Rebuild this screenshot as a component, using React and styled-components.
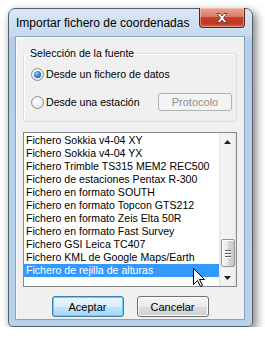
// Diálogo "Importar fichero de coordenadas" al estilo Windows 7

import React, { useState } from 'react';
import styled, { createGlobalStyle } from 'styled-components';

const GlobalStyle = createGlobalStyle`
  html, body {
    margin: 0;
    padding: 0;
    background: #ffffff;
  }
  *, *::before, *::after {
    box-sizing: border-box;
  }
`;

const ui = '"Liberation Sans", Arial, sans-serif';

const formatos = [
  'Fichero Sokkia v4-04 XY',
  'Fichero Sokkia v4-04 YX',
  'Fichero Trimble TS315 MEM2 REC500',
  'Fichero de estaciones Pentax R-300',
  'Fichero en formato SOUTH',
  'Fichero en formato Topcon GTS212',
  'Fichero en formato Zeis Elta 50R',
  'Fichero en formato Fast Survey',
  'Fichero GSI Leica TC407',
  'Fichero KML de Google Maps/Earth',
  'Fichero de rejilla de alturas',
];

// Ventana con marco Aero básico
const Window = styled.div`
  position: relative;
  margin: 8px 0 0 8px;
  width: 245px;
  height: 319px;
  display: flex;
  flex-direction: column;
  padding: 0 7px 6px 6px;
  border: 1px solid #56606c;
  border-radius: 7px 7px 5px 5px;
  background: linear-gradient(180deg, #dae6f3 0px, #c6d9ee 28px, #b3cfed 28px, #b8d2ee 100%);
  box-shadow: 3px 4px 9px 1px rgba(0, 0, 0, 0.45);
  font-family: ${ui};
  font-size: 10.6px;
  color: #000;
`;

const TitleBar = styled.div`
  height: 27px;
  flex: none;
  display: flex;
  align-items: flex-start;
  justify-content: space-between;
`;

const Title = styled.span`
  align-self: center;
  padding-left: 1px;
  font-size: 12px;
  color: #000;
  white-space: nowrap;
`;

const CloseButton = styled.div`
  margin-top: -1px;
  width: 46px;
  height: 20px;
  display: flex;
  align-items: center;
  justify-content: center;
  border: 1px solid #5e2219;
  border-top: none;
  border-radius: 0 0 4px 4px;
  background: linear-gradient(180deg, #e7a594 0%, #d97b66 45%, #c6412b 50%, #bd3620 80%, #d6664a 100%);
  box-shadow: inset 0 0 0 1px rgba(255, 220, 210, 0.45);
`;

const Client = styled.div`
  flex: 1;
  display: flex;
  flex-direction: column;
  padding: 0 7px;
  background: #f0f0f0;
  border: 1px solid #8ba3bf;
  box-shadow: inset 1px 1px 0 #fbfbfb;
`;

const Group = styled.fieldset`
  margin: 10px 0 0;
  padding: 5px 4px 10px 7px;
  border: 1px solid #d5dfe5;
  border-radius: 3px;
  box-shadow: inset 1px 1px 0 #ffffff;
  display: flex;
  flex-direction: column;
  gap: 10px;
`;

const Legend = styled.legend`
  margin-left: -3px;
  padding: 0 2px;
  line-height: 13px;
`;

const OptionRow = styled.div`
  height: 18px;
  display: flex;
  align-items: center;
`;

const Radio = styled.span`
  width: 13px;
  height: 13px;
  flex: none;
  border-radius: 50%;
  border: 1px solid #8f8f8f;
  background: radial-gradient(circle at 40% 35%, #ffffff 0%, #f1f1f1 45%, #d7d7d7 100%);
  display: flex;
  align-items: center;
  justify-content: center;

  &::after {
    content: '';
    display: ${props => (props.$checked ? 'block' : 'none')};
    width: 7px;
    height: 7px;
    border-radius: 50%;
    background: radial-gradient(circle at 40% 35%, #8fd2ff 0%, #2d87d8 45%, #0b3f86 100%);
  }
`;

const OptionText = styled.span`
  margin-left: 2px;
  white-space: nowrap;
`;

const SmallButton = styled.div`
  margin-left: auto;
  width: 74px;
  height: 18px;
  display: flex;
  align-items: center;
  justify-content: center;
  border: 1px solid #adb2b5;
  border-radius: 3px;
  background: #f4f4f4;
  color: #8f8f8f;
  font-size: 11px;
`;

const ListBox = styled.div`
  margin-top: 10px;
  height: 155px;
  display: flex;
  border: 1px solid #828790;
  background: #ffffff;
`;

const Items = styled.div`
  flex: 1;
  padding-top: 1px;
  display: flex;
  flex-direction: column;
`;

const Item = styled.div`
  height: 13px;
  line-height: 13px;
  padding-left: 2px;
  white-space: nowrap;
  background: ${props => (props.$selected ? '#3399ff' : 'transparent')};
  color: ${props => (props.$selected ? '#ffffff' : '#000000')};
`;

const ScrollBar = styled.div`
  width: 17px;
  flex: none;
  display: flex;
  flex-direction: column;
  background: linear-gradient(90deg, #e3e3e3 0%, #f4f4f4 15%, #f0f0f0 85%, #e3e3e3 100%);
`;

const Arrow = styled.div`
  height: 17px;
  flex: none;
  display: flex;
  align-items: center;
  justify-content: center;
`;

const Track = styled.div`
  flex: 1;
  display: flex;
  flex-direction: column;
  justify-content: flex-end;
  padding-bottom: 2px;
`;

const Thumb = styled.div`
  margin: 0 1px 0 2px;
  height: 28px;
  display: flex;
  flex-direction: column;
  align-items: center;
  justify-content: center;
  gap: 2px;
  border: 1px solid #959595;
  border-radius: 2px;
  background: linear-gradient(90deg, #f2f2f2 0%, #ebebeb 50%, #d6d6d6 50%, #c6c6c6 100%);
  box-shadow: inset 1px 1px 0 #ffffff;
`;

const Grip = styled.span`
  width: 6px;
  height: 1px;
  background: #5f5f5f;
  box-shadow: 0 1px 0 #ffffff;
`;

const ButtonRow = styled.div`
  margin-top: 9px;
  display: flex;
  justify-content: center;
  gap: 13px;
`;

const Button = styled.div`
  width: 72px;
  height: 21px;
  display: flex;
  align-items: center;
  justify-content: center;
  font-size: 11px;
  border: 1px solid ${props => (props.$default ? '#3c7fb1' : '#707070')};
  border-radius: 3px;
  background: ${props =>
    props.$default
      ? 'linear-gradient(180deg, #eaf6fd 0%, #d9f0fc 50%, #bee6fd 50%, #a7d9f5 100%)'
      : 'linear-gradient(180deg, #f2f2f2 0%, #ebebeb 50%, #dddddd 50%, #cfcfcf 100%)'};
  box-shadow: inset 0 0 0 1px ${props => (props.$default ? '#5fd0fb' : '#fcfcfc')};
`;

const Cursor = styled.svg`
  position: absolute;
  left: 184px;
  top: 259px;
  pointer-events: none;
`;

function ArrowIcon({ up }) {
  return (
    <svg width="7" height="4" viewBox="0 0 7 4">
      <path d={up ? 'M0 4 L3.5 0 L7 4 Z' : 'M0 0 L7 0 L3.5 4 Z'} fill="#222" />
    </svg>
  );
}

function App() {
  const [origen, setOrigen] = useState('fichero');
  const seleccionado = formatos.length - 1;

  return (
    <>
      <GlobalStyle />
      <Window>
        <TitleBar>
          <Title>Importar fichero de coordenadas</Title>
          <CloseButton>
            <svg width="12" height="10" viewBox="0 0 12 10">
              <path
                d="M1 0.5 H4 L6 3 L8 0.5 H11 L7.6 5 L11 9.5 H8 L6 7 L4 9.5 H1 L4.4 5 Z"
                fill="#ffffff"
                stroke="#5a2a22"
                strokeWidth="0.8"
              />
            </svg>
          </CloseButton>
        </TitleBar>

        <Client>
          <Group>
            <Legend>Selección de la fuente</Legend>
            <OptionRow onClick={() => setOrigen('fichero')}>
              <Radio $checked={origen === 'fichero'} />
              <OptionText>Desde un fichero de datos</OptionText>
            </OptionRow>
            <OptionRow onClick={() => setOrigen('estacion')}>
              <Radio $checked={origen === 'estacion'} />
              <OptionText>Desde una estación</OptionText>
              <SmallButton>Protocolo</SmallButton>
            </OptionRow>
          </Group>

          <ListBox>
            <Items>
              {formatos.map((f, i) => (
                <Item key={f} $selected={i === seleccionado}>{f}</Item>
              ))}
            </Items>
            <ScrollBar>
              <Arrow><ArrowIcon up /></Arrow>
              <Track>
                <Thumb>
                  <Grip />
                  <Grip />
                  <Grip />
                </Thumb>
              </Track>
              <Arrow><ArrowIcon /></Arrow>
            </ScrollBar>
          </ListBox>

          <ButtonRow>
            <Button $default>Aceptar</Button>
            <Button>Cancelar</Button>
          </ButtonRow>
        </Client>

        <Cursor width="13" height="20" viewBox="0 0 13 20">
          <path
            d="M0.5 0.5 L0.5 16.5 L4.5 12.5 L7.5 18.5 L9.5 17.5 L6.5 11.5 L11.5 11.5 Z"
            fill="#ffffff"
            stroke="#000000"
            strokeWidth="1"
            strokeLinejoin="miter"
          />
        </Cursor>
      </Window>
    </>
  );
}

export default App;
